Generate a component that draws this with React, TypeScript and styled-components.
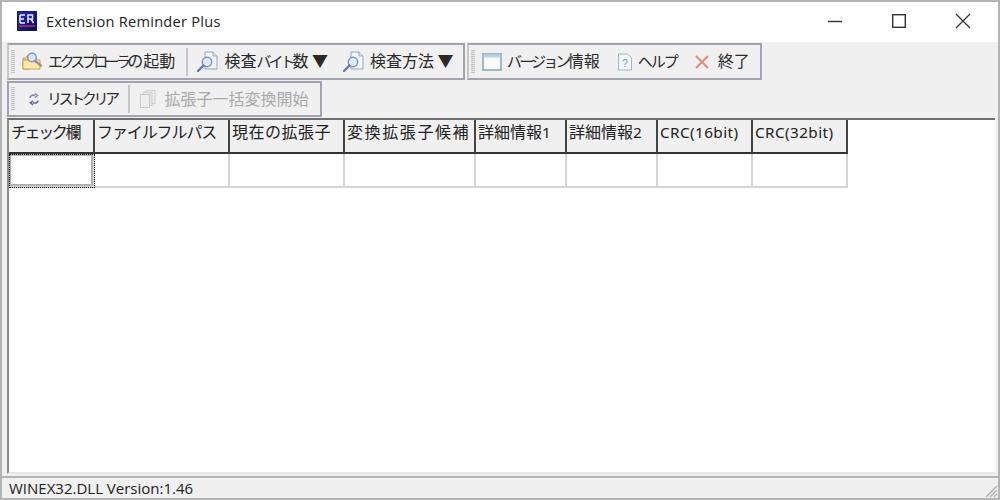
import React from "react";
import styled, { createGlobalStyle } from "styled-components";

const Global = createGlobalStyle`
  html, body { margin: 0; padding: 0; background: #fff; }
  * { box-sizing: border-box; }
`;
const Win = styled.div`
  width: 1000px; height: 500px; display: flex; flex-direction: column;
  border: 2px solid #b4b4b4; background: #f0f0f0; overflow: hidden;
  font-family: "Noto Sans CJK JP", "Noto Sans", sans-serif; color: #222;
`;
const TitleBar = styled.div`
  height: 40px; flex: none; background: #fff; display: flex; align-items: center; padding: 0 0 2px 15px;
`;
const TitleText = styled.span`
  font-family: "Open Sans", "Noto Sans", sans-serif; font-size: 14.6px; margin-left: 9px; color: #222; letter-spacing: 0.25px;
`;
const WinButtons = styled.div`
  margin-left: auto; display: flex; height: 100%; align-items: center; padding-right: 27px; gap: 48px;
`;
const ToolArea = styled.div`
  flex: none; height: 76px; padding-top: 1px; display: flex; flex-direction: column; gap: 1px; padding-left: 5px;
`;
const ToolRow = styled.div`
  display: flex; height: 37px; flex: none;
`;
const ToolBar = styled.div<{ $w: number; $first?: boolean }>`
  width: ${p => p.$w}px; height: ${p => (p.$first ? 37 : 36)}px; display: flex; align-items: center;
  border: 2px solid #a3a3b0; ${p => p.$first ? "border-left-color: #c8c8c8;" : ""} margin-right: 2px; padding-left: 2px;
`;
const Grip = styled.div`
  width: 4px; height: 24px; flex: none; margin-right: 6px;
  background: repeating-linear-gradient(to bottom, #c4c4c4 0 1px, #e8e8e8 1px 2px);
`;
const Tool = styled.div<{ $ml?: number; $gap?: number; $disabled?: boolean }>`
  display: flex; align-items: center; gap: ${p => p.$gap ?? 5}px; margin-left: ${p => p.$ml ?? 0}px;
  font-size: 16px; line-height: 20px; white-space: nowrap;
  color: ${p => (p.$disabled ? "#a9a9a9" : "#2a2a2a")};
`;
const Label = styled.span`
  padding-bottom: 3px;
`;
const Kana = styled.span<{ $ls?: number }>`
  font-size: 15px; letter-spacing: ${p => p.$ls ?? -3}px;
`;
const Sep = styled.div`
  width: 2px; height: 28px; background: #c6c6c6; margin: 0 8px 0 11px; flex: none;
`;
const Content = styled.div`
  flex: 1; min-height: 0; margin-left: 5px; margin-right: 3px; background: #fff;
  border-left: 2px solid #8c8c8c; border-top: 2px solid #6e6e6e; border-bottom: 2px solid #e6e6e6;
`;
const Grid = styled.div`
  display: grid; grid-template-columns: 86px 135px 115px 131px 91px 91px 95px 95px; width: 839px;
`;
const Head = styled.div<{ $ls?: number }>`
  height: 34px; background: #f0f0f0; border-right: 2px solid #444; border-bottom: 2px solid #333;
  font-size: 16px; line-height: 22px; padding: 0 0 0 2px; white-space: nowrap; color: #222;
  letter-spacing: ${p => p.$ls ?? 0}px;
`;
const HeadLatin = styled.span`
  font-family: "Noto Sans", sans-serif; font-size: 15.3px; letter-spacing: 0.4px;
`;
const Cell = styled.div<{ $focus?: boolean }>`
  height: 34px; background: #fff;
  border-right: 2px solid #d4d4d4; border-bottom: 2px solid #d4d4d4;
  ${p => p.$focus ? "outline: 1px dotted #000; outline-offset: -1px; box-shadow: inset 0 0 0 2px rgba(0,0,0,0.3);" : ""}
`;
const Divider = styled.div`
  height: 4px; flex: none; background: #f0f0f0; border-bottom: 2px solid #b4b4b4;
`;
const Status = styled.div`
  height: 20px; flex: none; display: flex; align-items: center; padding: 0 0 0 7px; position: relative;
  font-family: "Open Sans", "Noto Sans", sans-serif; font-size: 15px; color: #222;
`;
const Resize = styled.svg`
  position: absolute; right: 0; bottom: 0;
`;

const ERLogo = () => (
  <svg width="20" height="20" viewBox="0 0 20 20">
    <defs><linearGradient id="er" x1="0" y1="0" x2="1" y2="1"><stop offset="0" stopColor="#2030c0"/><stop offset="1" stopColor="#0a0a50"/></linearGradient></defs>
    <rect x="0.5" y="0.5" width="19" height="19" fill="url(#er)" stroke="#111a60"/>
    <path d="M3 4h5M3 4v8M3 8h4M3 12h5M11 12V4h4.5v4H11M14 8l2.5 4" fill="none" stroke="#e8e8f4" strokeWidth="1.5"/>
    <path d="M2 15h16" stroke="#c03060" strokeWidth="1.5"/>
  </svg>
);
const Explorer = () => (
  <svg width="22" height="22" viewBox="0 0 22 22">
    <path d="M2 7h3l1-2h3v13H2z" fill="#f5dd90" stroke="#c9a24a"/>
    <path d="M2 18V9h17v9z" fill="#fbe9a8" stroke="#c9a24a"/>
    <circle cx="11" cy="6.5" r="4.3" fill="#d9e9f8" stroke="#8094c8" strokeWidth="1.5"/>
    <path d="M14 10l6 4.5" stroke="#a08aa8" strokeWidth="2.2" strokeLinecap="round"/>
  </svg>
);
const Inspect = () => (
  <svg width="23" height="23" viewBox="0 0 23 23">
    <path d="M9 2h8l4 4v13H9z" fill="#f4f6fb" stroke="#93a5c4"/>
    <path d="M17 2v4h4" fill="#dfe6f2" stroke="#93a5c4"/>
    <circle cx="11" cy="12" r="4.7" fill="#dcecf7" stroke="#7b93bd" strokeWidth="1.5"/>
    <path d="M7.5 15.5L2 21" stroke="#5f78ad" strokeWidth="2.4" strokeLinecap="round"/>
  </svg>
);
const WindowIcon = () => (
  <svg width="20" height="20" viewBox="0 0 20 20">
    <rect x="1" y="2" width="18" height="16" fill="#fbfbfd" stroke="#7fa6b8" strokeWidth="1.5"/>
    <rect x="1.5" y="2.5" width="17" height="3" fill="#bcd3de"/>
  </svg>
);
const HelpIcon = () => (
  <svg width="16" height="18" viewBox="0 0 16 18">
    <path d="M1.5 1h9l4 4v12h-13z" fill="#f2f5fa" stroke="#a4b4cc"/>
    <text x="8" y="14" textAnchor="middle" fontSize="10" fontFamily="Liberation Sans, sans-serif" fill="#7c94bc">?</text>
  </svg>
);
const CloseRed = () => (
  <svg width="16" height="16" viewBox="0 0 16 16">
    <path d="M2 2l12 12M14 2L2 14" stroke="#dd8d7f" strokeWidth="2"/>
  </svg>
);
const Refresh = () => (
  <svg width="16" height="16" viewBox="0 0 16 16">
    <path d="M4 7c0-2 2-3.500 5-2.500M9 2.500l2.500 2L9 6.500" fill="none" stroke="#7f8aae" strokeWidth="1.6"/>
    <path d="M12 9.500c0 2-2 3-5 2.300M7 9.800l-2.500 2L7 13.800" fill="none" stroke="#5f6a90" strokeWidth="1.600"/>
  </svg>
);
const Copies = () => (
  <svg width="20" height="20" viewBox="0 0 20 20">
    <rect x="8" y="1.500" width="9" height="13" fill="#ececec" stroke="#cfcfcf"/>
    <rect x="5" y="3.500" width="9" height="13" fill="#e8e8e8" stroke="#cfcfcf"/>
    <rect x="2.500" y="5.500" width="9" height="13" fill="#eeeeee" stroke="#c8c8c8"/>
  </svg>
);

const heads: { node: React.ReactNode; ls?: number }[] = [
  { node: " チェック欄", ls: -2.4 },
  { node: "ファイルフルパス", ls: -1.1 },
  { node: "現在の拡張子", ls: 0.5 },
  { node: "変換拡張子候補", ls: 1.6 },
  { node: <>詳細情報<HeadLatin>1</HeadLatin></> },
  { node: <>詳細情報<HeadLatin>2</HeadLatin></> },
  { node: <HeadLatin>CRC(16bit)</HeadLatin> },
  { node: <HeadLatin>CRC(32bit)</HeadLatin> },
];

export default function App() {
  return (
    <>
      <Global />
      <Win>
        <TitleBar>
          <ERLogo />
          <TitleText>Extension Reminder Plus</TitleText>
          <WinButtons>
            <svg width="16" height="16" viewBox="0 0 16 16"><path d="M1 8.500h14" stroke="#333" strokeWidth="1.400"/></svg>
            <svg width="16" height="16" viewBox="0 0 16 16"><rect x="1.700" y="1.700" width="12.600" height="12.600" fill="none" stroke="#333" strokeWidth="1.400"/></svg>
            <svg width="16" height="16" viewBox="0 0 16 16"><path d="M1 1l14 14M15 1L1 15" stroke="#333" strokeWidth="1.300"/></svg>
          </WinButtons>
        </TitleBar>
        <ToolArea>
          <ToolRow>
            <ToolBar $w={458} $first>
              <Grip />
              <Tool><Explorer /><Label><Kana $ls={-3.6}>エクスプローラ</Kana>の起動</Label></Tool>
              <Sep />
              <Tool><Inspect /><Label>検査<Kana>バイト</Kana>数 ▼</Label></Tool>
              <Tool $ml={14}><Inspect /><Label>検査方法 ▼</Label></Tool>
            </ToolBar>
            <ToolBar $w={295} $first>
              <Grip />
              <Tool $ml={1}><WindowIcon /><Label><Kana $ls={-2.8}>バージョン</Kana>情報</Label></Tool>
              <Tool $ml={17}><HelpIcon /><Label><Kana $ls={-2}>ヘルプ</Kana></Label></Tool>
              <Tool $ml={17} $gap={8}><CloseRed /><Label>終了</Label></Tool>
            </ToolBar>
          </ToolRow>
          <ToolRow>
            <ToolBar $w={315}>
              <Grip />
              <Tool $ml={5}><Refresh /><Label><Kana $ls={-3.4}>リストクリア</Kana></Label></Tool>
              <Sep />
              <Tool $disabled $gap={7}><Copies /><Label>拡張子一括変換開始</Label></Tool>
            </ToolBar>
          </ToolRow>
        </ToolArea>
        <Content>
          <Grid>
            {heads.map((h, i) => <Head key={i} $ls={h.ls}>{h.node}</Head>)}
            {heads.map((_, i) => <Cell key={i} $focus={i === 0} />)}
          </Grid>
        </Content>
        <Divider />
        <Status>
          WINEX32.DLL Version:1.46
          <Resize width="14" height="14" viewBox="0 0 14 14">
            <path d="M13 2L2 13M13 6L6 13M13 10l-3 3" stroke="#aaa" strokeWidth="1.200"/>
          </Resize>
        </Status>
      </Win>
    </>
  );
}
